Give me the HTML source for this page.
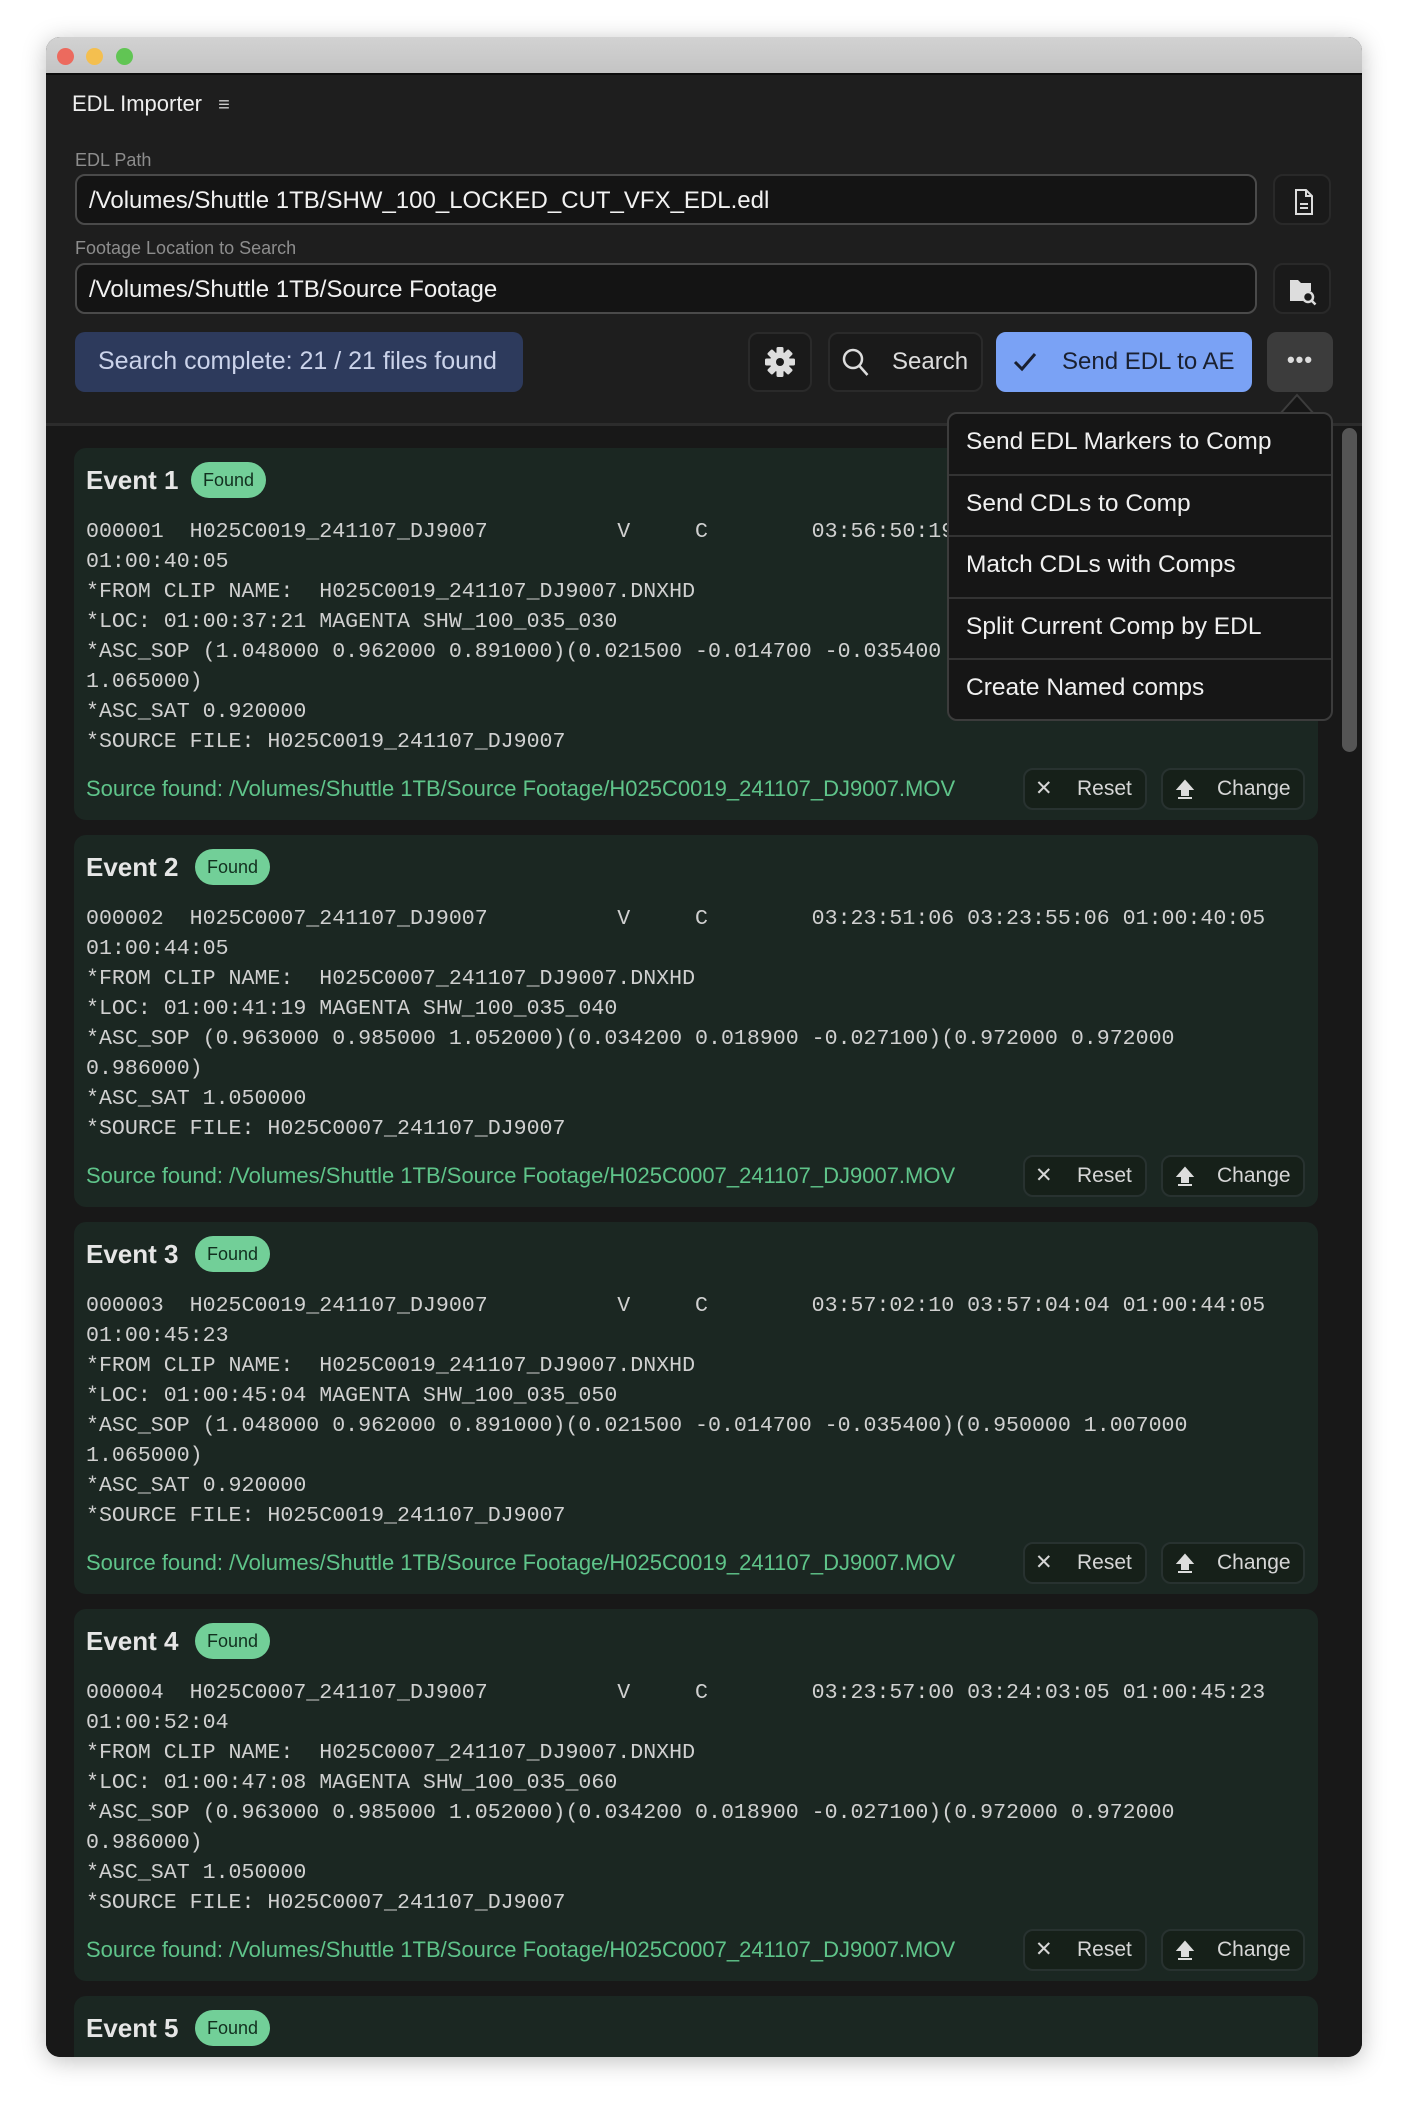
<!DOCTYPE html>
<html><head><meta charset="utf-8"><style>
*{box-sizing:border-box;margin:0;padding:0}
body{width:1408px;height:2112px;background:#fff;position:relative;overflow:hidden;font-family:"Liberation Sans",sans-serif}
.win{position:absolute;left:46px;top:37px;width:1316px;height:2020px;border-radius:14px;overflow:hidden;background:#1e1e1e;box-shadow:0 4px 24px rgba(0,0,0,.25)}
.tb{position:absolute;left:0;top:0;width:100%;height:38px;background:linear-gradient(#d2d2d2,#c4c4c4);border-bottom:2px solid #0c0c0c}
.dot{position:absolute;top:11px;width:17px;height:17px;border-radius:50%}
.a{position:absolute}
.lbl{color:#8d8d8d;font-size:18px}
.inp{position:absolute;left:29px;width:1182px;height:51px;border:2px solid #4a4a4a;border-radius:10px;background:#141414;color:#f2f2f2;font-size:24px;padding:11px 0 0 12px}
.ib{position:absolute;left:1227px;width:58px;height:51px;border:2px solid #292929;border-radius:10px;background:#1a1a1a}
.btn{position:absolute;top:295px;height:60px;border-radius:10px;border:2px solid #2a2a2a;background:#1a1a1a;color:#ddd;font-size:24px}
.list{position:absolute;left:0;top:386px;width:100%;height:1634px;background:#181818;border-top:3px solid #2c2c2c;overflow:hidden}
.card{position:absolute;left:28px;width:1244px;height:372px;background:#1b2722;border-radius:12px}
.ttl{position:absolute;left:12px;top:17px;color:#e6e6e6;font-size:26px;font-weight:bold}
.pill{position:absolute;top:14px;height:36px;padding:0 12px;background:#72cf98;color:#12301f;border-radius:18px;font-size:18px;line-height:36px}
.mono{position:absolute;left:12px;top:69px;font-family:"Liberation Mono",monospace;font-size:21.6px;line-height:30px;color:#d0d0d0;white-space:pre}
.src{position:absolute;left:12px;top:328px;color:#5fc48a;font-size:22px}
.sb{position:absolute;top:320px;height:42px;border:2px solid #283230;border-radius:10px;background:#162019;color:#d6d6d6;font-size:21px;line-height:38px}
.menu{position:absolute;left:901px;top:375px;width:386px;height:309px;background:#161616;border:2px solid #3c3c3c;border-radius:10px;overflow:hidden}
.mi{height:61.5px;border-bottom:2px solid #333;color:#f0f0f0;font-size:24.5px;padding:14px 0 0 17px}
</style></head><body>
<div class="win">
<div class="tb"><div class="dot" style="left:11px;background:#ec6a5e"></div><div class="dot" style="left:40px;background:#f4bf4f"></div><div class="dot" style="left:70px;background:#61c554"></div></div>
<div class="a" style="left:26px;top:54px;color:#eee;font-size:22px">EDL Importer <span style="margin-left:10px;font-size:20px;color:#ccc">&#8801;</span></div>
<div class="a lbl" style="left:29px;top:113px">EDL Path</div>
<div class="inp" style="top:137px">/Volumes/Shuttle 1TB/SHW_100_LOCKED_CUT_VFX_EDL.edl</div>
<div class="ib" style="top:137px"><svg width="58" height="51" viewBox="0 0 58 51"><path d="M21 14h10l6 6v18h-16z M31 14v6h6" fill="none" stroke="#ddd" stroke-width="2"/><path d="M25 28h8M25 32h8" stroke="#ddd" stroke-width="2"/></svg></div>
<div class="a lbl" style="left:29px;top:201px">Footage Location to Search</div>
<div class="inp" style="top:226px">/Volumes/Shuttle 1TB/Source Footage</div>
<div class="ib" style="top:226px"><svg width="58" height="51" viewBox="0 0 58 51"><path d="M15 15h8l3 3h10v8a8 8 0 0 0-8 10h-13z" fill="#ddd"/><circle cx="33" cy="32" r="5" fill="none" stroke="#ddd" stroke-width="2.5"/><path d="M36.5 35.5l4 4" stroke="#ddd" stroke-width="2.5"/></svg></div>
<div class="a" style="left:29px;top:295px;width:448px;height:60px;background:#2d3a5c;border-radius:10px;color:#cbd3ea;font-size:25px;padding:15px 0 0 23px">Search complete: 21 / 21 files found</div>
<div class="btn" style="left:702px;width:64px"><svg width="60" height="56" viewBox="0 0 60 56"><g transform="translate(30,28)" fill="#ddd"><circle r="10"/><rect x="-3.5" y="-15" width="7" height="30" rx="1.5"/><rect x="-3.5" y="-15" width="7" height="30" rx="1.5" transform="rotate(45)"/><rect x="-3.5" y="-15" width="7" height="30" rx="1.5" transform="rotate(90)"/><rect x="-3.5" y="-15" width="7" height="30" rx="1.5" transform="rotate(135)"/><circle r="4" fill="#1a1a1a"/></g></svg></div>
<div class="btn" style="left:782px;width:155px"><svg class="a" style="left:10px;top:12px" width="32" height="34" viewBox="0 0 32 34"><circle cx="13" cy="13" r="9" fill="none" stroke="#ddd" stroke-width="2.5"/><path d="M19.5 20l8 9" stroke="#ddd" stroke-width="2.5"/></svg><span class="a" style="left:62px;top:14px">Search</span></div>
<div class="btn" style="left:950px;width:256px;background:#7aa2f5;border-color:#7aa2f5;color:#1a2030"><svg class="a" style="left:14px;top:16px" width="26" height="24" viewBox="0 0 26 24"><path d="M3 12l7 7L23 4" fill="none" stroke="#1a2030" stroke-width="3"/></svg><span class="a" style="left:64px;top:14px">Send EDL to AE</span></div>
<div class="btn" style="left:1221px;width:66px;background:#3c3c3c;border-color:#3c3c3c;text-align:center;font-size:22px;line-height:52px;font-weight:bold;letter-spacing:1px">&#8226;&#8226;&#8226;</div>
<div class="list">
<div class="a" style="left:1296px;top:2px;width:15px;height:324px;border-radius:8px;background:#555"></div>
<div class="card" style="top:22px"><div class="ttl">Event 1</div><div class="pill" style="left:117px">Found</div><div class="mono">000001  H025C0019_241107_DJ9007          V     C        03:56:50:19
01:00:40:05
*FROM CLIP NAME:  H025C0019_241107_DJ9007.DNXHD
*LOC: 01:00:37:21 MAGENTA SHW_100_035_030
*ASC_SOP (1.048000 0.962000 0.891000)(0.021500 -0.014700 -0.035400
1.065000)
*ASC_SAT 0.920000
*SOURCE FILE: H025C0019_241107_DJ9007</div><div class="src">Source found: /Volumes/Shuttle 1TB/Source Footage/H025C0019_241107_DJ9007.MOV</div><div class="sb" style="left:949px;width:124px"><span class="a" style="left:10px">&#10005;</span><span class="a" style="left:52px">Reset</span></div><div class="sb" style="left:1087px;width:144px"><svg class="a" style="left:12px;top:9px" width="20" height="22" viewBox="0 0 20 22"><path d="M10 2l7 8h-4v6h-6v-6h-4z M3 19h14" fill="#ddd" stroke="#ddd" stroke-width="2"/></svg><span class="a" style="left:54px">Change</span></div></div>
<div class="card" style="top:409px"><div class="ttl">Event 2</div><div class="pill" style="left:121px">Found</div><div class="mono">000002  H025C0007_241107_DJ9007          V     C        03:23:51:06 03:23:55:06 01:00:40:05
01:00:44:05
*FROM CLIP NAME:  H025C0007_241107_DJ9007.DNXHD
*LOC: 01:00:41:19 MAGENTA SHW_100_035_040
*ASC_SOP (0.963000 0.985000 1.052000)(0.034200 0.018900 -0.027100)(0.972000 0.972000
0.986000)
*ASC_SAT 1.050000
*SOURCE FILE: H025C0007_241107_DJ9007</div><div class="src">Source found: /Volumes/Shuttle 1TB/Source Footage/H025C0007_241107_DJ9007.MOV</div><div class="sb" style="left:949px;width:124px"><span class="a" style="left:10px">&#10005;</span><span class="a" style="left:52px">Reset</span></div><div class="sb" style="left:1087px;width:144px"><svg class="a" style="left:12px;top:9px" width="20" height="22" viewBox="0 0 20 22"><path d="M10 2l7 8h-4v6h-6v-6h-4z M3 19h14" fill="#ddd" stroke="#ddd" stroke-width="2"/></svg><span class="a" style="left:54px">Change</span></div></div>
<div class="card" style="top:796px"><div class="ttl">Event 3</div><div class="pill" style="left:121px">Found</div><div class="mono">000003  H025C0019_241107_DJ9007          V     C        03:57:02:10 03:57:04:04 01:00:44:05
01:00:45:23
*FROM CLIP NAME:  H025C0019_241107_DJ9007.DNXHD
*LOC: 01:00:45:04 MAGENTA SHW_100_035_050
*ASC_SOP (1.048000 0.962000 0.891000)(0.021500 -0.014700 -0.035400)(0.950000 1.007000
1.065000)
*ASC_SAT 0.920000
*SOURCE FILE: H025C0019_241107_DJ9007</div><div class="src">Source found: /Volumes/Shuttle 1TB/Source Footage/H025C0019_241107_DJ9007.MOV</div><div class="sb" style="left:949px;width:124px"><span class="a" style="left:10px">&#10005;</span><span class="a" style="left:52px">Reset</span></div><div class="sb" style="left:1087px;width:144px"><svg class="a" style="left:12px;top:9px" width="20" height="22" viewBox="0 0 20 22"><path d="M10 2l7 8h-4v6h-6v-6h-4z M3 19h14" fill="#ddd" stroke="#ddd" stroke-width="2"/></svg><span class="a" style="left:54px">Change</span></div></div>
<div class="card" style="top:1183px"><div class="ttl">Event 4</div><div class="pill" style="left:121px">Found</div><div class="mono">000004  H025C0007_241107_DJ9007          V     C        03:23:57:00 03:24:03:05 01:00:45:23
01:00:52:04
*FROM CLIP NAME:  H025C0007_241107_DJ9007.DNXHD
*LOC: 01:00:47:08 MAGENTA SHW_100_035_060
*ASC_SOP (0.963000 0.985000 1.052000)(0.034200 0.018900 -0.027100)(0.972000 0.972000
0.986000)
*ASC_SAT 1.050000
*SOURCE FILE: H025C0007_241107_DJ9007</div><div class="src">Source found: /Volumes/Shuttle 1TB/Source Footage/H025C0007_241107_DJ9007.MOV</div><div class="sb" style="left:949px;width:124px"><span class="a" style="left:10px">&#10005;</span><span class="a" style="left:52px">Reset</span></div><div class="sb" style="left:1087px;width:144px"><svg class="a" style="left:12px;top:9px" width="20" height="22" viewBox="0 0 20 22"><path d="M10 2l7 8h-4v6h-6v-6h-4z M3 19h14" fill="#ddd" stroke="#ddd" stroke-width="2"/></svg><span class="a" style="left:54px">Change</span></div></div>
<div class="card" style="top:1570px"><div class="ttl">Event 5</div><div class="pill" style="left:121px">Found</div></div>
</div>
<svg class="a" style="left:1234px;top:356px" width="34" height="22" viewBox="0 0 34 22"><path d="M0 21L17 2L34 21" fill="#161616" stroke="#3c3c3c" stroke-width="2"/></svg>
<div class="menu"><div class="mi">Send EDL Markers to Comp</div><div class="mi">Send CDLs to Comp</div><div class="mi">Match CDLs with Comps</div><div class="mi">Split Current Comp by EDL</div><div class="mi" style="border:none">Create Named comps</div></div>
</div>
</body></html>
